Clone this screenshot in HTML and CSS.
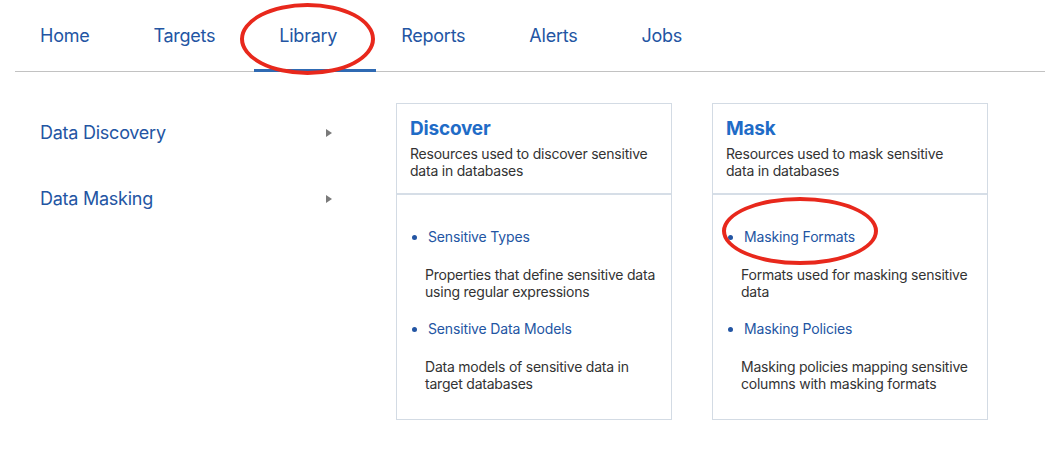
FILE: index.html
```html
<!DOCTYPE html>
<html lang="en">
<head>
<meta charset="utf-8">
<title>Library</title>
<link rel="stylesheet" href="styles.css">
</head>
<body>
<header class="topbar">
  <nav class="tabs">
    <a class="tab">Home</a>
    <a class="tab">Targets</a>
    <a class="tab active">Library</a>
    <a class="tab">Reports</a>
    <a class="tab">Alerts</a>
    <a class="tab">Jobs</a>
  </nav>
</header>
<main class="main">
  <aside class="side">
    <div class="side-item"><span>Data Discovery</span><span class="caret"></span></div>
    <div class="side-item"><span>Data Masking</span><span class="caret"></span></div>
  </aside>
  <section class="cards">
    <div class="card">
      <div class="card-head">
        <h2>Discover</h2>
        <p>Resources used to discover sensitive data in databases</p>
      </div>
      <ul class="card-body">
        <li><a class="link">Sensitive Types</a><p>Properties that define sensitive data using regular expressions</p></li>
        <li><a class="link">Sensitive Data Models</a><p>Data models of sensitive data in target databases</p></li>
      </ul>
    </div>
    <div class="card">
      <div class="card-head">
        <h2>Mask</h2>
        <p>Resources used to mask sensitive data in databases</p>
      </div>
      <ul class="card-body">
        <li><a class="link">Masking Formats</a><p>Formats used for masking sensitive data</p></li>
        <li><a class="link">Masking Policies</a><p>Masking policies mapping sensitive columns with masking formats</p></li>
      </ul>
    </div>
  </section>
</main>
<div class="ring ring-tab"></div>
<div class="ring ring-link"></div>
</body>
</html>
```
FILE: styles.css
```css
html, body {
  margin: 0;
  padding: 0;
  background: #fff;
  font-family: Inter, "Liberation Sans", sans-serif;
}
.topbar {
  margin-left: 15px;
  border-bottom: 1px solid #c2c2c2;
  height: 72px;
  box-sizing: border-box;
}
.tabs {
  display: flex;
  gap: 64px;
  padding: 24px 0 0 25px;
}
.tab {
  position: relative;
  font-size: 18px;
  line-height: 24px;
  letter-spacing: -0.25px;
  color: #2355a3;
}
.tab.active::after {
  content: "";
  position: absolute;
  left: -25px;
  width: 122px;
  top: 45px;
  height: 3px;
  background: #2f6ab3;
}
.main {
  display: flex;
  padding: 31px 0 0 40px;
}
.side {
  width: 292px;
  margin-right: 64px;
  display: flex;
  flex-direction: column;
  gap: 42px;
  padding-top: 18px;
}
.side-item {
  display: flex;
  justify-content: space-between;
  align-items: center;
  font-size: 18px;
  line-height: 24px;
  letter-spacing: -0.25px;
  color: #2355a3;
}
.caret {
  width: 0;
  height: 0;
  border-top: 4px solid transparent;
  border-bottom: 4px solid transparent;
  border-left: 6px solid #7a7a7a;
}
.cards {
  display: flex;
  gap: 40px;
}
.card {
  width: 276px;
  border: 1px solid #d3dbe4;
  box-sizing: border-box;
}
.card-head {
  padding: 12px 13px 14px;
  border-bottom: 2px solid #d6dee7;
}
.card-head h2 {
  margin: 0;
  font-size: 19px;
  line-height: 26px;
  font-weight: 700;
  letter-spacing: -0.2px;
  color: #1f6cc7;
}
.card-head p {
  margin: 3px 0 0;
  font-size: 14px;
  line-height: 17px;
  letter-spacing: -0.22px;
  color: #333;
}
.card-body {
  list-style: none;
  margin: 0;
  padding: 33px 6px 27px 28px;
}
.card-body li {
  position: relative;
}
.card-body li + li {
  margin-top: 20px;
}
.card-body li::before {
  content: "";
  position: absolute;
  left: -13px;
  top: 6.5px;
  width: 5px;
  height: 5px;
  border-radius: 50%;
  background: #2355a3;
}
.link {
  display: block;
  margin-left: 3px;
  font-size: 14px;
  line-height: 18px;
  letter-spacing: -0.15px;
  color: #2355a3;
}
.card-body p {
  margin: 20px 0 0;
  font-size: 14px;
  line-height: 17px;
  letter-spacing: -0.22px;
  color: #333;
}
.ring {
  position: absolute;
  border: 4px solid #e8281c;
  border-radius: 50%;
  box-sizing: border-box;
}
.ring-tab {
  left: 240px;
  top: 3px;
  width: 135px;
  height: 72px;
}
.ring-link {
  left: 722px;
  top: 197px;
  width: 156px;
  height: 68px;
}
```
